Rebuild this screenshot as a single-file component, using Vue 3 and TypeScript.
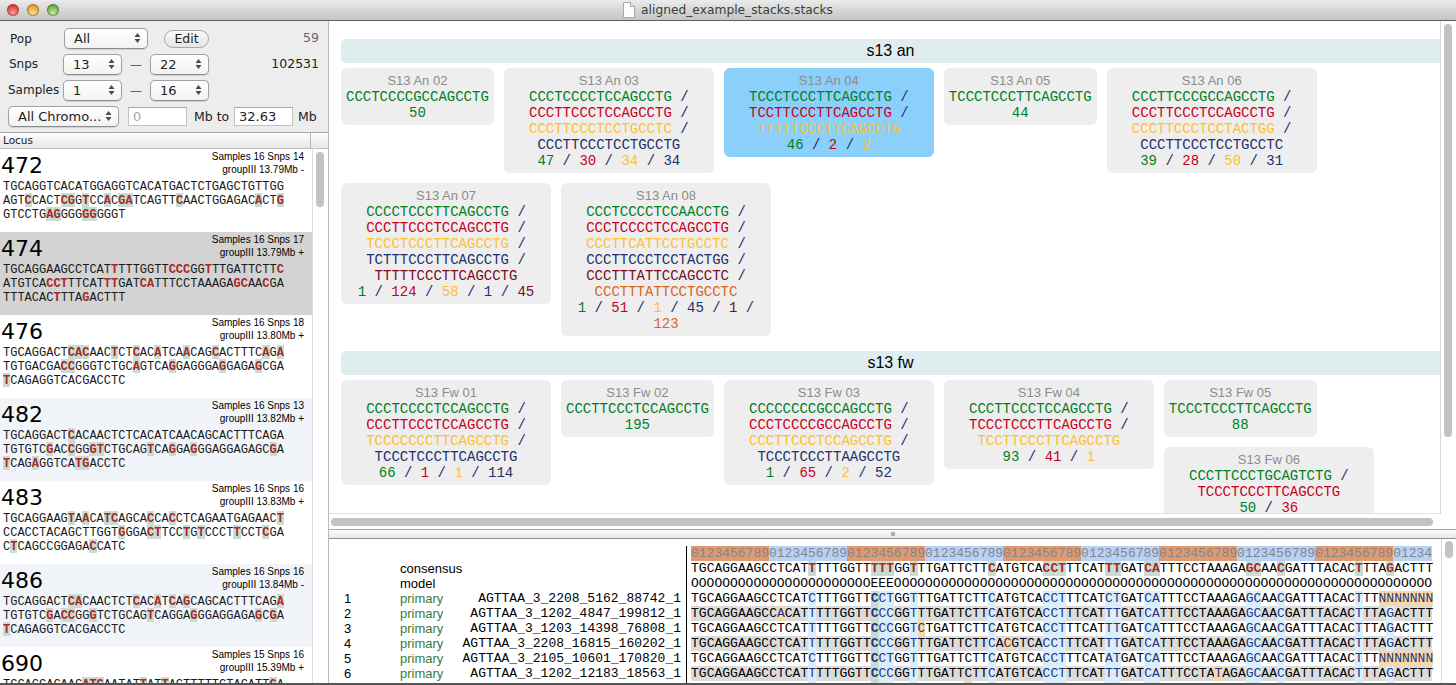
<script setup lang="ts">
interface Locus {
  id: number
  meta: string[]
  lines: string[]
  tone?: 'picked' | 'alt'
}
interface Card {
  title: string
  seqs: string[]
  counts: number[]
  selected?: boolean
}
interface Cell {
  ch: string
  cls: string
}

// lowercase letters are the snp positions
const loci: Locus[] = [
  { id: 472, meta: ['Samples 16 Snps 14', 'groupIII 13.79Mb -'], lines: ['TGCAGGTCACATGGAGGTCACATGACTCTGAGCTGTTGG', 'AGTcCACTcgGtCCaCgaTCAGTTcAACTGGAGACaCTg', 'GTCCTGagGGGggGGGT'] },
  { id: 474, tone: 'picked', meta: ['Samples 16 Snps 17', 'groupIII 13.79Mb +'], lines: ['TGCAGGAAGCCTCATtTTTGGTTcccGGtTTGATTCTTc', 'ATGTCAcctTTCATttGATcaTTTCCTAAAGAgcAAcGA', 'TTTACACtTTAgACTTT'] },
  { id: 476, meta: ['Samples 16 Snps 18', 'groupIII 13.80Mb +'], lines: ['TGCAGGACTcacAACtCTcACaTCAaCAGcACTTTCaGa', 'TGTGACGAccGGGTCTGCaGTCAgGAGGGAgGAGAgCGA', 'tCAGAGGTCACGACCTC'] },
  { id: 482, tone: 'alt', meta: ['Samples 16 Snps 13', 'groupIII 13.82Mb +'], lines: ['TGCAGGACTcACAACTCTCACATCAACAGCACTTTCAGA', 'TGTGTCgACcGGgtCTGCAGtCAgGAgGGAGGAGAGCgA', 'tCAGaGGTCAtgACCTC'] },
  { id: 483, meta: ['Samples 16 Snps 16', 'groupIII 13.83Mb +'], lines: ['TGCAGGAAGtAaCAtcAGCAcCAcCTCAGAATGAGAACt', 'CCACCTACAGCTTGGTgGGActTCCtGtCCCTtCCTcGA', 'CtCAGCCGGAGAcCATC'] },
  { id: 486, tone: 'alt', meta: ['Samples 16 Snps 16', 'groupIII 13.84Mb -'], lines: ['TGCAGGACTcaCAACTCTcACaTcAgCAGCACTTTCAGa', 'TGTGTCgAccGGgTCTGCAGtCAGGAgGGAGGAGAgCgA', 'tCAGAGGTCACGACCTC'] },
  { id: 690, meta: ['Samples 15 Snps 16', 'groupIII 15.39Mb +'], lines: ['TGCAGCAGAAGatgAATATtATtAGTTTTTGTAGATTgA'] },
]

const sections: { name: string; cards: Card[] }[] = [
  {
    name: 's13 an',
    cards: [
      { title: 'S13 An 02', seqs: ['CCCTCCCCGCCAGCCTG'], counts: [50] },
      { title: 'S13 An 03', seqs: ['CCCTCCCCTCCAGCCTG', 'CCCTTCCCTCCAGCCTG', 'CCCTTCCCTCCTGCCTC', 'CCCTTCCCTCCTGCCTG'], counts: [47, 30, 34, 34] },
      { title: 'S13 An 04', selected: true, seqs: ['TCCCTCCCTTCAGCCTG', 'TCCTTCCCTTCAGCCTG', 'TTTTTCCCTTCAGCCTG'], counts: [46, 2, 2] },
      { title: 'S13 An 05', seqs: ['TCCCTCCCTTCAGCCTG'], counts: [44] },
      { title: 'S13 An 06', seqs: ['CCCTTCCCGCCAGCCTG', 'CCCTTCCCTCCAGCCTG', 'CCCTTCCCTCCTACTGG', 'CCCTTCCCTCCTGCCTC'], counts: [39, 28, 50, 31] },
      { title: 'S13 An 07', seqs: ['CCCCTCCCTTCAGCCTG', 'CCCTTCCCTCCAGCCTG', 'TCCCTCCCTTCAGCCTG', 'TCTTTCCCTTCAGCCTG', 'TTTTTCCCTTCAGCCTG'], counts: [1, 124, 58, 1, 45] },
      { title: 'S13 An 08', seqs: ['CCCTCCCCTCCAACCTG', 'CCCTCCCCTCCAGCCTG', 'CCCTTCATTCCTGCCTC', 'CCCTTCCCTCCTACTGG', 'CCCTTTATTCCAGCCTC', 'CCCTTTATTCCTGCCTC'], counts: [1, 51, 1, 45, 1, 123] },
    ],
  },
  {
    name: 's13 fw',
    cards: [
      { title: 'S13 Fw 01', seqs: ['CCCTCCCCTCCAGCCTG', 'CCCTTCCCTCCAGCCTG', 'TCCCCCCCTTCAGCCTG', 'TCCCTCCCTTCAGCCTG'], counts: [66, 1, 1, 114] },
      { title: 'S13 Fw 02', seqs: ['CCCTTCCCTCCAGCCTG'], counts: [195] },
      { title: 'S13 Fw 03', seqs: ['CCCCCCCCGCCAGCCTG', 'CCCTCCCCGCCAGCCTG', 'CCCTTCCCTCCAGCCTG', 'TCCCTCCCTTAAGCCTG'], counts: [1, 65, 2, 52] },
      { title: 'S13 Fw 04', seqs: ['CCCTTCCCTCCAGCCTG', 'TCCCTCCCTTCAGCCTG', 'TCCTTCCCTTCAGCCTG'], counts: [93, 41, 1] },
      { title: 'S13 Fw 05', seqs: ['TCCCTCCCTTCAGCCTG'], counts: [88] },
      { title: 'S13 Fw 06', seqs: ['CCCTTCCCTGCAGTCTG', 'TCCCTCCCTTCAGCCTG'], counts: [50, 36] },
    ],
  },
]

function segments(line: string): { text: string; hl: boolean }[] {
  const out: { text: string; hl: boolean }[] = []
  for (const ch of line) {
    const hl = ch !== ch.toUpperCase()
    const last = out[out.length - 1]
    if (last && last.hl === hl) last.text += ch.toUpperCase()
    else out.push({ text: ch.toUpperCase(), hl })
  }
  return out
}

const decades = Array.from({ length: 10 }, (_, i) => (i === 9 ? '01234' : '0123456789'))

const base = 'TGCAGGAAGCCTCATTTTTGGTTCCCGGTTTGATTCTTCATGTCACCTTTCATTTGATCATTTCCTAAAGAGCAACGATTTACACTTTAGACTTT'
const snps = [15, 23, 24, 25, 28, 38, 45, 46, 47, 53, 54, 58, 59, 71, 72, 75, 85, 89]

function patch(edits: Record<number, string>): string {
  return base.split('').map((c, i) => edits[i] ?? c).join('')
}

const consensus = patch({ 23: 'T', 24: 'T', 25: 'T' })
  .split('')
  .map((ch, i): Cell => ({ ch, cls: snps.includes(i) ? 'c-hl' : '' }))
const model = 'O'.repeat(23) + 'EEE' + 'O'.repeat(69)

const noN = { 88: 'N', 89: 'N', 90: 'N', 91: 'N', 92: 'N', 93: 'N', 94: 'N' }
const reads = [
  { name: 'AGTTAA_3_2208_5162_88742_1', seq: patch({ 15: 'C', 25: 'T', 53: 'C', ...noN }), odd: [88, 89, 90, 91, 92, 93, 94] },
  { name: 'AGTTAA_3_1202_4847_199812_1', seq: patch({ 11: 'A' }), odd: [11] },
  { name: 'AGTTAA_3_1203_14398_76808_1', seq: patch({ 29: 'C' }), odd: [29] },
  { name: 'AGTTAA_3_2208_16815_160202_1', seq: patch({ 40: 'C' }), odd: [40] },
  { name: 'AGTTAA_3_2105_10601_170820_1', seq: patch({ 15: 'C', 25: 'T', 53: 'A', ...noN }), odd: [88, 89, 90, 91, 92, 93, 94] },
  { name: 'AGTTAA_3_1202_12183_18563_1', seq: patch({ 67: 'T' }), odd: [67] },
  { name: 'AGTTAA_3_1202_9914_40127_1', seq: patch({ 35: 'A' }), odd: [35] },
]

function readCells(seq: string, odd: number[]): Cell[] {
  return seq.split('').map((ch, i) => {
    let cls = ''
    if (odd.includes(i)) cls = 'c-odd'
    else if (i === 23) cls = 'c-key'
    else if (snps.includes(i)) cls = 'c-snp'
    return { ch, cls }
  })
}
</script>

<template>
  <div class="window">
    <header class="titlebar">
      <div class="lights">
        <i class="light red"></i>
        <i class="light amber"></i>
        <i class="light green"></i>
      </div>
      <div class="doc-title">
        <svg width="12" height="16" viewBox="0 0 12 16">
          <path d="M0.5 0.5H7.5L11.5 4.5V15.5H0.5Z" fill="#fcfcfc" stroke="#a8a8a8" />
          <path d="M7.5 0.5V4.5H11.5" fill="#e4e4e4" stroke="#a8a8a8" />
        </svg>
        <span>aligned_example_stacks.stacks</span>
      </div>
      <div></div>
    </header>

    <div class="body">
      <aside class="side">
        <div class="controls">
          <div class="ctl-row">
            <label class="lbl lbl-pop">Pop</label>
            <div class="sel sel-pop">All
              <svg class="updown" width="7" height="12" viewBox="0 0 7 12"><path d="M3.5 1L6.5 5H0.5ZM3.5 11L0.5 7H6.5Z" /></svg>
            </div>
            <button class="edit">Edit</button>
            <span class="stat muted">59</span>
          </div>
          <div class="ctl-row">
            <label class="lbl lbl-snp">Snps</label>
            <div class="sel sel-num">13
              <svg class="updown" width="7" height="12" viewBox="0 0 7 12"><path d="M3.5 1L6.5 5H0.5ZM3.5 11L0.5 7H6.5Z" /></svg>
            </div>
            <span class="dash">—</span>
            <div class="sel sel-num">22
              <svg class="updown" width="7" height="12" viewBox="0 0 7 12"><path d="M3.5 1L6.5 5H0.5ZM3.5 11L0.5 7H6.5Z" /></svg>
            </div>
            <span class="stat">102531</span>
          </div>
          <div class="ctl-row">
            <label class="lbl">Samples</label>
            <div class="sel sel-num">1
              <svg class="updown" width="7" height="12" viewBox="0 0 7 12"><path d="M3.5 1L6.5 5H0.5ZM3.5 11L0.5 7H6.5Z" /></svg>
            </div>
            <span class="dash">—</span>
            <div class="sel sel-num">16
              <svg class="updown" width="7" height="12" viewBox="0 0 7 12"><path d="M3.5 1L6.5 5H0.5ZM3.5 11L0.5 7H6.5Z" /></svg>
            </div>
          </div>
          <div class="ctl-row">
            <div class="sel sel-chrom">All Chromo...
              <svg class="updown" width="7" height="12" viewBox="0 0 7 12"><path d="M3.5 1L6.5 5H0.5ZM3.5 11L0.5 7H6.5Z" /></svg>
            </div>
            <div class="field placeholder">0</div>
            <span class="unit unit-to">Mb to</span>
            <div class="field">32.63</div>
            <span class="unit">Mb</span>
          </div>
        </div>

        <div class="col-head">
          <span class="col-name">Locus</span>
          <span class="col-end"></span>
        </div>

        <div class="list-wrap">
          <div class="list">
            <div v-for="l in loci" :key="l.id" class="locus" :class="l.tone">
              <div class="locus-head">
                <span class="locus-id">{{ l.id }}</span>
                <div class="locus-meta">
                  <div v-for="m in l.meta" :key="m">{{ m }}</div>
                </div>
              </div>
              <div v-for="(line, i) in l.lines" :key="i" class="locus-seq">
                <span v-for="(s, j) in segments(line)" :key="j" :class="{ hl: s.hl }">{{ s.text }}</span>
              </div>
            </div>
          </div>
          <div class="list-scroll"><div class="thumb list-thumb"></div></div>
        </div>
      </aside>

      <main class="main">
        <div class="top-pane">
          <div class="cards-view">
            <section v-for="sec in sections" :key="sec.name" class="group">
              <h2 class="group-name">{{ sec.name }}</h2>
              <div class="group-cards">
                <div v-for="c in sec.cards" :key="c.title" class="card" :class="{ selected: c.selected }">
                  <div class="card-title">{{ c.title }}</div>
                  <div class="card-seqs">
                    <template v-for="(s, i) in c.seqs" :key="i">
                      <span :class="'tone' + i">{{ s }}</span>
                      <span v-if="i < c.seqs.length - 1" class="slash">{{ ' / ' }}</span>
                    </template>
                  </div>
                  <div class="card-seqs">
                    <template v-for="(n, i) in c.counts" :key="i">
                      <span :class="'tone' + i">{{ n }}</span>
                      <span v-if="i < c.counts.length - 1" class="slash">{{ ' / ' }}</span>
                    </template>
                  </div>
                </div>
              </div>
            </section>
          </div>
          <div class="v-scroll"><div class="thumb cards-thumb"></div></div>
          <div class="h-scroll"><div class="thumb wide-thumb"></div></div>
          <div class="corner"></div>
        </div>

        <div class="splitter"><i class="grip"></i></div>

        <div class="bottom-pane">
          <div class="reads">
            <div class="read-row">
              <div class="read-info"></div>
              <div class="read-seq"><span v-for="(d, i) in decades" :key="i" class="ruler" :class="i % 2 ? 'r-blue' : 'r-orange'">{{ d }}</span></div>
            </div>
            <div class="read-row">
              <div class="read-info"><span class="num"></span><span class="kind">consensus</span></div>
              <div class="read-seq"><span v-for="(c, i) in consensus" :key="i" class="cell" :class="c.cls">{{ c.ch }}</span></div>
            </div>
            <div class="read-row">
              <div class="read-info"><span class="num"></span><span class="kind">model</span></div>
              <div class="read-seq"><span class="cell">{{ model }}</span></div>
            </div>
            <div v-for="(r, i) in reads" :key="r.name" class="read-row">
              <div class="read-info">
                <span class="num">{{ i + 1 }}</span>
                <span class="kind primary">primary</span>
                <span class="read-name">{{ r.name }}</span>
              </div>
              <div class="read-seq" :class="{ stripe: i % 2 === 1 }"><span v-for="(c, k) in readCells(r.seq, r.odd)" :key="k" class="cell" :class="c.cls">{{ c.ch }}</span></div>
            </div>
          </div>
          <div class="reads-scroll"><div class="thumb reads-thumb"></div></div>
        </div>
      </main>
    </div>
  </div>
</template>

<style>
html, body {
  margin: 0;
  overflow: hidden;
  background: #fff;
}
</style>

<style scoped>
.window {
  width: 1456px;
  height: 685px;
  display: flex;
  flex-direction: column;
  overflow: hidden;
  box-sizing: border-box;
  border-bottom: 2px solid #555;
  font-family: "Liberation Sans", Arial, sans-serif;
  color: #000;
}

/* title bar */
.titlebar {
  flex: none;
  height: 20px;
  display: grid;
  grid-template-columns: 1fr auto 1fr;
  align-items: center;
  background: linear-gradient(#ebebeb, #c4c4c4);
  border-bottom: 1px solid #616161;
}
.lights {
  display: flex;
  gap: 8px;
  padding-left: 7px;
}
.light {
  width: 12px;
  height: 12px;
  border-radius: 50%;
  box-shadow: inset 0 0 0 1px rgba(90, 60, 40, 0.45);
}
.red { background: radial-gradient(circle at 50% 75%, #f8a09a, #d8383a 70%); }
.amber { background: radial-gradient(circle at 50% 75%, #fde09a, #e09a28 70%); }
.green { background: radial-gradient(circle at 50% 75%, #c8eda0, #62a848 70%); }
.doc-title {
  display: flex;
  align-items: center;
  gap: 6px;
  font-family: "DejaVu Sans", sans-serif;
  font-size: 12.25px;
  color: #3c3c3c;
}

.body {
  flex: 1;
  min-height: 0;
  display: flex;
}

/* left column */
.side {
  flex: none;
  width: 329px;
  box-sizing: border-box;
  border-right: 1px solid #bcbcbc;
  display: flex;
  flex-direction: column;
  background: #ededed;
  font-family: "DejaVu Sans", sans-serif;
}
.controls {
  flex: none;
  height: 111px;
  box-sizing: border-box;
  padding: 7px 9px 0 8px;
  display: flex;
  flex-direction: column;
  gap: 5px;
  font-size: 12.5px;
  color: #222;
}
.ctl-row {
  height: 21px;
  display: flex;
  align-items: center;
}
.lbl {
  width: 55px;
  font-size: 12px;
  margin-top: -2px;
}
.lbl-pop {
  width: 54px;
  padding-left: 2px;
  margin-top: 0;
}
.lbl-snp {
  width: 54px;
  padding-left: 1px;
}
.sel {
  position: relative;
  height: 21px;
  box-sizing: border-box;
  padding-left: 9px;
  line-height: 19px;
  font-size: 13px;
  border: 1px solid #a0a0a0;
  border-bottom-color: #8c8c8c;
  border-radius: 5px;
  background: linear-gradient(#ffffff, #f2f2f2);
  box-shadow: 0 1px 1px rgba(0, 0, 0, 0.12);
}
.sel-pop { width: 84px; }
.sel-num { width: 59px; }
.sel-chrom { width: 111px; }
.updown {
  position: absolute;
  right: 6px;
  top: 3px;
  fill: #4a4a4a;
}
.edit {
  margin-left: 16px;
  width: 45px;
  height: 18px;
  padding: 0;
  border: 1px solid #a8a8a8;
  border-radius: 9px;
  background: linear-gradient(#fafafa, #e4e4e4);
  font: 12.5px "DejaVu Sans", sans-serif;
  color: #222;
}
.dash {
  width: 28px;
  text-align: center;
  color: #666;
  font-size: 12px;
}
.stat {
  margin-left: auto;
  margin-top: -2px;
  font-size: 12.5px;
  color: #222;
}
.muted { color: #666; }
.field {
  flex: none;
  width: 59px;
  height: 19px;
  box-sizing: border-box;
  padding-left: 4px;
  line-height: 18px;
  font-size: 13px;
  background: #fff;
  border: 1px solid #c2c2c2;
  border-top-color: #a8a8a8;
}
.placeholder {
  margin-left: 9px;
  color: #aaa;
}
.unit {
  flex: none;
  margin-left: 5px;
  white-space: nowrap;
  font-size: 12.5px;
}
.unit-to {
  width: 40px;
  margin-left: 7px;
}

.col-head {
  flex: none;
  height: 17px;
  box-sizing: border-box;
  display: flex;
  border-top: 1px solid #a8a8a8;
  border-bottom: 1px solid #c4c4c4;
  background: linear-gradient(#fefefe, #e6e6e6);
  font: 10.5px/15px "DejaVu Sans", sans-serif;
  color: #222;
}
.col-name {
  width: 311px;
  padding-left: 3px;
  box-sizing: border-box;
  border-right: 1px solid #b8b8b8;
}
.col-end { flex: 1; }

.list-wrap {
  flex: 1;
  min-height: 0;
  display: flex;
  background: #fff;
}
.list {
  width: 312px;
  flex: none;
  overflow: hidden;
}
.locus {
  height: 83px;
  box-sizing: border-box;
  background: #fff;
}
.locus.picked { background: #d3d3d3; }
.locus.alt { background: #f1f5fa; }
.locus-head {
  height: 30px;
  display: flex;
  justify-content: space-between;
  padding-right: 8px;
}
.locus-id {
  padding-left: 1px;
  font: 22px/33px "DejaVu Sans", sans-serif;
}
.locus-meta {
  padding-top: 1px;
  text-align: right;
  font: 10px/13.3px "Liberation Sans", Arial, sans-serif;
}
.locus-seq {
  height: 14px;
  padding-left: 3px;
  white-space: pre;
  font: 12px/14px "Liberation Mono", "Courier New", monospace;
  color: #1a1a1a;
}
.locus-seq span {
  display: inline-block;
  height: 14px;
  line-height: 17px;
  vertical-align: top;
}
.locus-seq .hl {
  background: #c9dcd2;
  color: #a52a2a;
  font-weight: 700;
}
.locus.picked .locus-seq .hl { background: transparent; }
.list-scroll {
  flex: 1;
  box-sizing: border-box;
  border-left: 1px solid #dcdcdc;
  padding: 3px 3px 0 3px;
}
.thumb {
  background: #c2c2c2;
  border-radius: 4px;
}
.list-thumb {
  width: 8px;
  height: 55px;
}

/* right column */
.main {
  flex: 1;
  min-width: 0;
  display: flex;
  flex-direction: column;
}
.top-pane {
  flex: none;
  height: 508px;
  display: grid;
  grid-template-columns: 1fr 16px;
  grid-template-rows: 493px 15px;
}
.cards-view {
  overflow: hidden;
  padding: 18px 0 0 12px;
  box-sizing: border-box;
  border-bottom: 1px solid #e2e2e2;
}
.group { padding-bottom: 5px; }
.group-name {
  height: 24px;
  margin: 0 0 5px;
  text-align: center;
  font: 400 16px/24px "Liberation Sans", Arial, sans-serif;
  background: #dfedee;
  border-radius: 5px 0 0 5px;
}
.group-cards::after {
  content: "";
  display: block;
  clear: both;
}
.card {
  float: left;
  max-width: 200px;
  padding: 4px 5px;
  margin: 0 10px 10px 0;
  text-align: center;
  background: #eeeeee;
  border-radius: 6px;
}
.card.selected { background: #8bcffb; }
.card-title {
  font: 13px/17px "Liberation Sans", Arial, sans-serif;
  color: #8c8c8c;
}
.card-seqs {
  font: 14px/16px "Liberation Mono", "Courier New", monospace;
}
.tone0 { color: #00801e; }
.tone1 { color: #c8001e; }
.tone2 { color: #ffbf2e; }
.tone3 { color: #22306e; }
.tone4 { color: #7a0a22; }
.tone5 { color: #e0641e; }
.slash { color: #22306e; white-space: pre-wrap; }

.v-scroll {
  border-left: 1px solid #d8d8d8;
  padding: 3px 0 0 3px;
}
.cards-thumb {
  width: 8px;
  height: 413px;
}
.h-scroll { padding: 4px 0 0 2px; }
.wide-thumb {
  width: 1102px;
  height: 8px;
}
.corner { background: #fff; }

.splitter {
  flex: none;
  height: 10px;
  box-sizing: border-box;
  display: flex;
  align-items: center;
  justify-content: center;
  border-top: 1px solid #a8a8a8;
  border-bottom: 1px solid #8e8e8e;
  background: linear-gradient(#fbfbfb, #e8e8e8);
}
.grip {
  width: 4px;
  height: 4px;
  border-radius: 50%;
  background: #bcbcbc;
  box-shadow: inset 0 0 0 1px #9a9a9a;
}

.bottom-pane {
  flex: 1;
  min-height: 0;
  display: flex;
  background: #fff;
}
.reads {
  flex: none;
  width: 1112px;
  padding-top: 7px;
  box-sizing: border-box;
  overflow: hidden;
}
.read-row {
  height: 15px;
  display: flex;
}
.read-info {
  flex: none;
  width: 357px;
  box-sizing: border-box;
  padding-right: 5px;
  display: flex;
  font: 13px/15px "Liberation Sans", Arial, sans-serif;
}
.num {
  flex: none;
  width: 71px;
  box-sizing: border-box;
  padding-left: 15px;
}
.kind {
  flex: none;
  width: 62px;
}
.primary { color: #3c7a3c; }
.read-name {
  flex: 1;
  text-align: right;
  white-space: pre;
  font: 13px/15px "Liberation Mono", "Courier New", monospace;
}
.read-seq {
  flex: none;
  width: 746px;
  height: 15px;
  box-sizing: border-box;
  padding-left: 4px;
  border-left: 1px solid #000;
  white-space: pre;
  font: 13px/15px "Liberation Mono", "Courier New", monospace;
  background-clip: content-box;
}
.read-seq.stripe { background-color: #dcdcdc; }
.ruler, .cell {
  display: inline-block;
  height: 15px;
  line-height: 16px;
  vertical-align: top;
}
.ruler { color: #858585; }
.r-orange { background: #e09a72; }
.r-blue { background: #b9d1f8; }
.c-hl {
  background: #c9dcd2;
  color: #a52a2a;
  font-weight: 700;
}
.c-snp {
  background: #d9effb;
  color: #26347e;
}
.c-key {
  background: #c9dcd2;
  color: #26347e;
  font-weight: 700;
}
.c-odd { background: #fad8a6; color: #26347e; }
.reads-scroll {
  flex: 1;
  box-sizing: border-box;
  border-left: 1px solid #d8d8d8;
  padding: 2px 0 0 3px;
}
.reads-thumb {
  width: 8px;
  height: 17px;
}
</style>
